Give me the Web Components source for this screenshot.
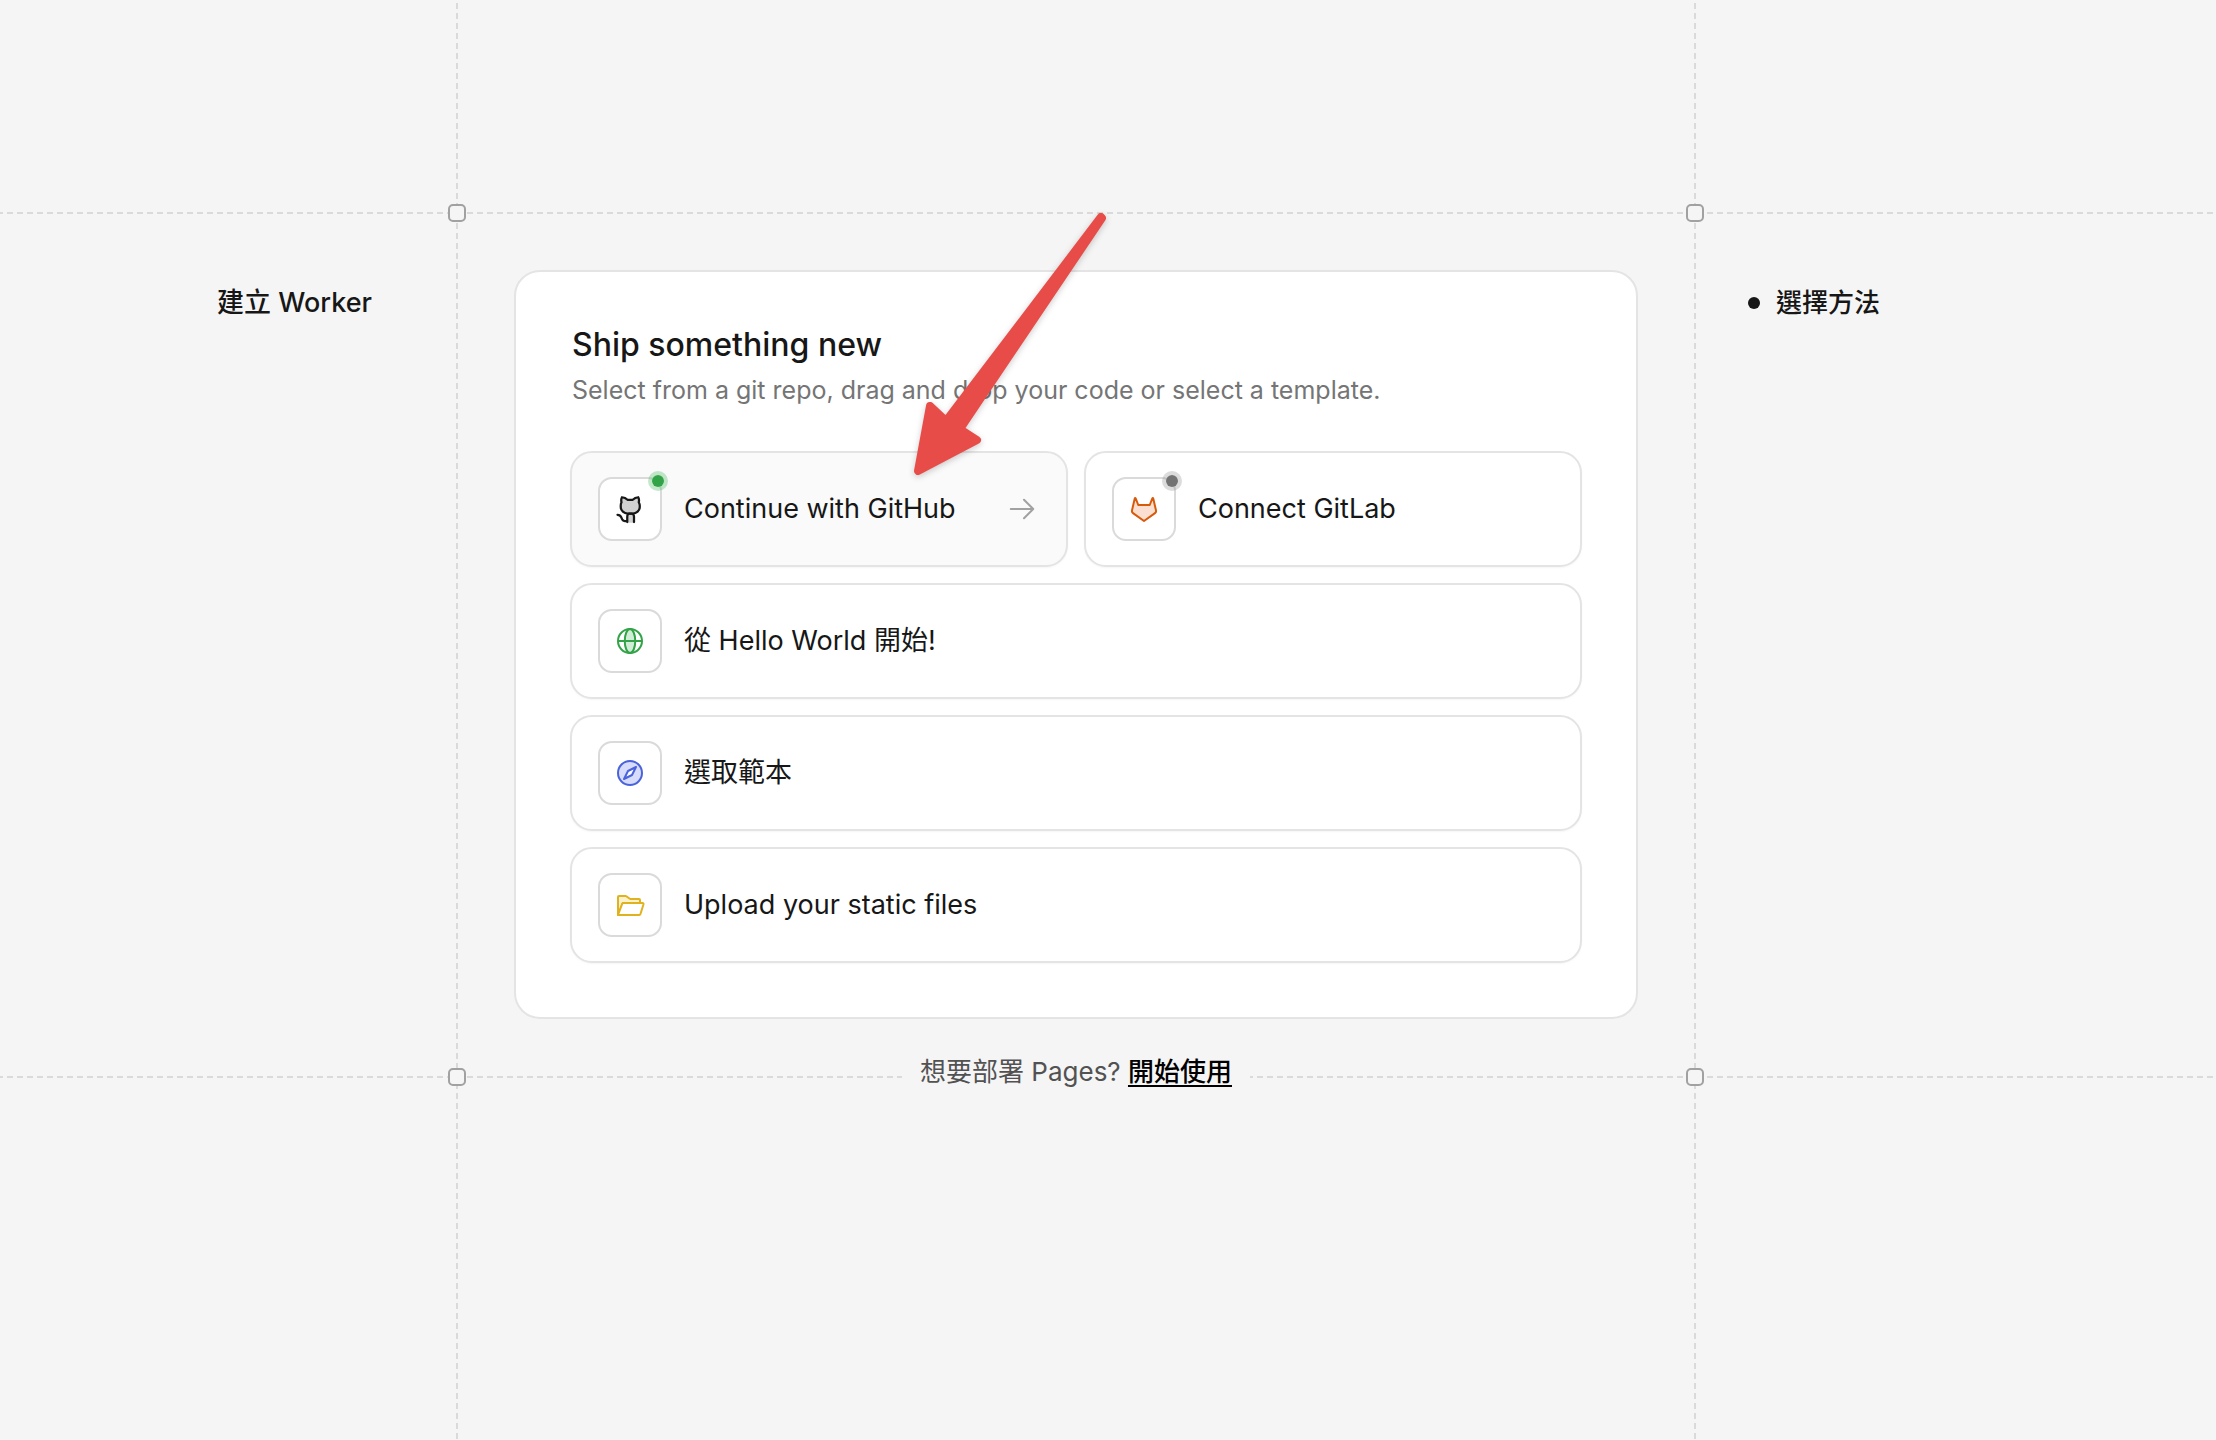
<!DOCTYPE html>
<html lang="zh-Hant">
<head>
<meta charset="utf-8">
<meta name="viewport" content="width=device-width, initial-scale=1">
<title>建立 Worker</title>
<style>
  body {
    margin: 0;
    background: #f5f5f5;
    color: #171717;
    font-family: Inter, "Noto Sans CJK TC", sans-serif;
  }
</style>
</head>
<body>
<worker-page></worker-page>

<template id="guide-line-template">
  <style>
    :host {
      display: block;
      width: 2px;
      background: linear-gradient(to bottom, #dadada 6px, transparent 6px) 0 3px / 2px 10px;
    }
    :host([horizontal]) {
      width: auto;
      height: 2px;
      background: linear-gradient(to right, #dadada 6px, transparent 6px) 7px 0 / 10px 2px;
    }
  </style>
</template>

<template id="guide-node-template">
  <style>
    :host {
      display: block;
      box-sizing: border-box;
      width: 18px;
      height: 18px;
      border: 2px solid #a1a1a1;
      border-radius: 5px;
      background: #f5f5f5;
    }
  </style>
</template>

<template id="method-tile-template">
  <style>
    :host { display: block; }
    button {
      box-sizing: border-box;
      display: flex;
      align-items: center;
      gap: 22px;
      width: 100%;
      padding: 24px 28px 24px 26px;
      border: 2px solid #e4e4e4;
      border-radius: 22px;
      background: #fff;
      box-shadow: 0 1px 2px rgba(0, 0, 0, .04);
      color: inherit;
      font: inherit;
      font-size: 27px;
      line-height: 40px;
      text-align: left;
      cursor: pointer;
    }
    :host([active]) button { background: #fafafa; }
    .icon {
      position: relative;
      box-sizing: border-box;
      display: flex;
      flex: none;
      align-items: center;
      justify-content: center;
      width: 64px;
      height: 64px;
      border: 2px solid #dadada;
      border-radius: 14px;
      background: #fff;
    }
    .label { flex: 1; }
    .status {
      position: absolute;
      top: -8px;
      right: -8px;
      display: none;
      width: 12px;
      height: 12px;
      border-radius: 50%;
      border: 4px solid;
      background-clip: padding-box;
    }
    :host([status]) .status { display: block; }
    :host([status="on"]) .status { background-color: #32a346; border-color: rgba(60, 180, 80, .3); }
    :host([status="off"]) .status { background-color: #737373; border-color: rgba(115, 115, 115, .25); }
    .arrow { display: none; flex: none; color: #a1a1a1; }
    :host([active]) .arrow { display: block; }
  </style>
  <button type="button">
    <span class="icon"><slot name="icon"></slot><span class="status"></span></span>
    <span class="label"><slot></slot></span>
    <svg class="arrow" width="32" height="32" viewBox="0 0 256 256" fill="none" stroke="currentColor" stroke-width="16" stroke-linecap="round" stroke-linejoin="round" aria-hidden="true"><path d="M38 128H218M144 54L218 128L144 202"/></svg>
  </button>
</template>

<template id="method-card-template">
  <style>
    :host {
      display: block;
      box-sizing: border-box;
      padding: 54px;
      border: 2px solid #e4e4e4;
      border-radius: 26px;
      background: #fff;
    }
    header { padding: 0 2px; margin-bottom: 41px; }
    h1 { margin: 0; font-size: 32px; font-weight: 500; line-height: 38px; }
    p { margin: 6px 0 0; color: #757575; font-size: 25px; line-height: 40px; }
    .methods { display: grid; grid-template-columns: 1fr 1fr; gap: 16px; }
  </style>
  <header>
    <h1><slot name="title"></slot></h1>
    <p><slot name="summary"></slot></p>
  </header>
  <div class="methods"><slot></slot></div>
</template>

<template id="step-item-template">
  <style>
    :host { display: flex; align-items: center; gap: 16px; font-size: 26px; font-weight: 500; line-height: 40px; }
    i { width: 12px; height: 12px; border-radius: 50%; background: #171717; }
  </style>
  <i></i><span><slot></slot></span>
</template>

<template id="pointer-arrow-template">
  <style>
    :host { display: block; pointer-events: none; }
    svg { display: block; overflow: visible; filter: drop-shadow(0 2px 3px rgba(0, 0, 0, .2)); }
  </style>
  <svg width="192" height="264" viewBox="0 0 192 264" aria-hidden="true">
    <path fill="#e84c49" stroke="#e84c49" stroke-width="8" stroke-linejoin="round" d="M187 5L188 6L46 217L63 228L4 259L16 194L32 209Z"/>
  </svg>
</template>

<template id="worker-page-template">
  <style>
    :host {
      display: grid;
      grid-template-columns: 456px 2px minmax(0, 1fr) 2px 520px;
      grid-template-rows: 212px 2px auto 2px 1fr;
      min-height: 100vh;
      overflow: hidden;
    }
    .top { grid-area: 2 / 1 / 3 / -1; }
    .bottom { grid-area: 4 / 1 / 5 / -1; }
    .left { grid-area: 1 / 2 / -1 / 3; }
    .right { grid-area: 1 / 4 / -1 / 5; }
    guide-node { place-self: center; }
    .tl { grid-area: 2 / 2; }
    .tr { grid-area: 2 / 4; }
    .bl { grid-area: 4 / 2; }
    .br { grid-area: 4 / 4; }
    aside { grid-area: 3 / 1; padding: 69px 84px; text-align: right; }
    h2 { margin: 0; font-size: 27px; font-weight: 500; line-height: 40px; }
    main { grid-area: 3 / 3; position: relative; padding: 56px 56px 57px; }
    nav { grid-area: 3 / 5; padding: 69px 52px; }
    .wide { grid-column: 1 / -1; }
    .pages {
      position: absolute;
      left: 50%;
      bottom: 0;
      transform: translate(-50%, 50%);
      padding: 0 18px 8px;
      background: #f5f5f5;
      color: #525252;
      font-size: 26px;
      line-height: 40px;
      white-space: nowrap;
    }
    .pages a { color: #000; font-weight: 500; text-decoration: underline; text-decoration-thickness: 2px; text-underline-offset: 4px; }
    pointer-arrow { position: absolute; left: 456px; top: -2px; z-index: 1; }
    svg { display: block; }
  </style>
  <guide-line class="top" horizontal></guide-line>
  <guide-line class="bottom" horizontal></guide-line>
  <guide-line class="left"></guide-line>
  <guide-line class="right"></guide-line>
  <guide-node class="tl"></guide-node>
  <guide-node class="tr"></guide-node>
  <guide-node class="bl"></guide-node>
  <guide-node class="br"></guide-node>

  <aside><h2>建立 Worker</h2></aside>

  <main>
    <method-card>
      <span slot="title">Ship something new</span>
      <span slot="summary">Select from a git repo, drag and drop your code or select a template.</span>
      <method-tile active status="on">
        <svg slot="icon" width="32" height="32" viewBox="0 0 256 256" fill="none" stroke="#171717" stroke-width="18" stroke-linecap="round" stroke-linejoin="round" aria-hidden="true">
          <path d="M106 238V190Q106 166 122 164H142Q160 166 160 190V238Z" fill="#d1d1d1" stroke="none"/>
          <path d="M112 164A56 52 0 0 1 54 112V100Q54 86 60 74Q54 52 64 34Q90 36 108 54H150Q168 36 194 34Q204 52 198 74Q206 88 206 102V112A56 52 0 0 1 148 164Z" fill="#d1d1d1"/>
          <path d="M106 232V190Q106 168 122 164H142Q160 168 160 190V232M28 174Q50 174 58 194Q66 222 84 224H104"/>
        </svg>
        Continue with GitHub
      </method-tile>
      <method-tile status="off">
        <svg slot="icon" width="32" height="32" viewBox="0 0 256 256" fill="#fbe0d2" stroke="#d9590b" stroke-width="16" stroke-linecap="round" stroke-linejoin="round" aria-hidden="true">
          <path d="M128 224L40 161Q29 153 32 139L54 44Q57 35 62 44L82 96H174L194 44Q199 35 202 44L224 139Q227 153 216 161Z"/>
        </svg>
        Connect GitLab
      </method-tile>
      <method-tile class="wide">
        <svg slot="icon" width="32" height="32" viewBox="0 0 256 256" fill="none" stroke="#32a346" stroke-width="16" aria-hidden="true">
          <ellipse cx="128" cy="128" rx="42" ry="96" fill="#d2edd7"/>
          <circle cx="128" cy="128" r="96"/>
          <path d="M32 128H224"/>
        </svg>
        從 Hello World 開始!
      </method-tile>
      <method-tile class="wide">
        <svg slot="icon" width="32" height="32" viewBox="0 0 256 256" stroke="#4a63dc" stroke-width="16" stroke-linejoin="round" aria-hidden="true">
          <circle cx="128" cy="128" r="96" fill="#d6dcfa"/>
          <path d="M176 80L112 112L80 176L144 144Z" fill="#fff"/>
        </svg>
        選取範本
      </method-tile>
      <method-tile class="wide">
        <svg slot="icon" width="32" height="32" viewBox="0 0 256 256" fill="none" stroke="#e0b21d" stroke-width="16" stroke-linecap="round" stroke-linejoin="round" aria-hidden="true">
          <path d="M32 208V64A8 8 0 0 1 40 56H93Q96 56 99 58L126 78Q129 80 132 80H200A8 8 0 0 1 208 88V112H77Q71 112 69 118Z" fill="#fbf1cc"/>
          <path d="M32 208L66 117Q69 112 74 112H228Q238 112 236 122L211 202Q209 208 203 208Z" fill="#fff"/>
        </svg>
        Upload your static files
      </method-tile>
    </method-card>
    <div class="pages">想要部署 Pages? <a href="#pages">開始使用</a></div>
    <pointer-arrow></pointer-arrow>
  </main>

  <nav aria-label="步驟"><step-item>選擇方法</step-item></nav>
</template>

<script>
  class TemplateElement extends HTMLElement {
    constructor() {
      super();
      const template = document.getElementById(this.localName + '-template');
      this.attachShadow({ mode: 'open' }).append(template.content.cloneNode(true));
    }
  }
  customElements.define('guide-line', class GuideLine extends TemplateElement {});
  customElements.define('guide-node', class GuideNode extends TemplateElement {});
  customElements.define('method-tile', class MethodTile extends TemplateElement {});
  customElements.define('method-card', class MethodCard extends TemplateElement {});
  customElements.define('step-item', class StepItem extends TemplateElement {});
  customElements.define('pointer-arrow', class PointerArrow extends TemplateElement {});
  customElements.define('worker-page', class WorkerPage extends TemplateElement {});
</script>
</body>
</html>
